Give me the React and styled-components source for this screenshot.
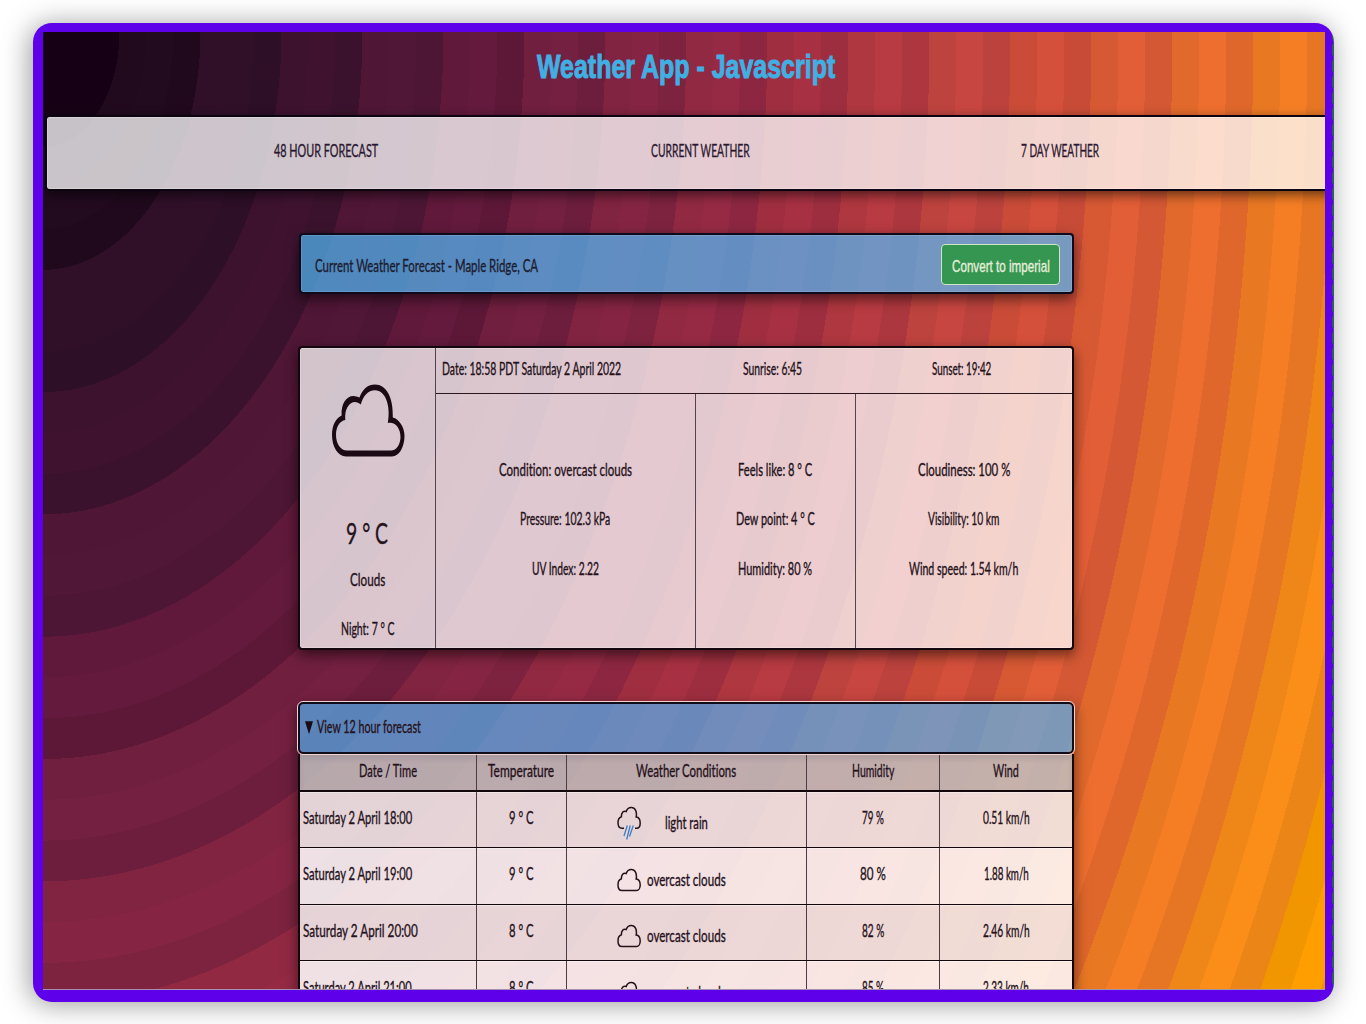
import React, { useLayoutEffect, useRef, useState } from "react";
import styled, { createGlobalStyle } from "styled-components";

const bands = [
  "#160015", "#220a1f", "#301029", "#3f1330", "#511737", "#631a3c",
  "#742041", "#852543", "#962a45", "#a73143", "#b83a42", "#c74641",
  "#d5503b", "#e25e37", "#ed6e2e", "#f57e25", "#fb8e19", "#ff9e00", "#ffa800",
];
const shade = (hex, k) =>
  "rgb(" +
  [1, 3, 5].map((i) => Math.round(parseInt(hex.slice(i, i + 2), 16) * k)).join(",") +
  ")";

const PERIOD = 81;
const STRETCH = 1.51;
const MAX = bands.length * PERIOD;
const stops = bands
  .flatMap((c, i) => {
    const start = (i - 0.056) * PERIOD;
    const edge = (n) => ((Math.max(0, start + (n * PERIOD) / 3) / MAX) * 100).toFixed(3) + "%";
    const tone = i === 0 ? [1, 1, 1] : i < 9 ? [0.97, 1, 0.94] : [0.95, 1, 0.94];
    return tone.map((k, n) => `${shade(c, k)} ${edge(n)} ${edge(n + 1)}`);
  })
  .join(",");

const Global = createGlobalStyle`
  * { box-sizing: border-box; }
  html, body { margin: 0; background: #fff; }
  body {
    height: 1024px;
    overflow: hidden;
    font-family: Lato, "Open Sans", sans-serif;
    font-variant-ligatures: none;
    color: #25121b;
  }
`;

const Stage = styled.div`
  height: 1024px;
  padding: 23px 0 0 33px;
  overflow: hidden;
`;

const Frame = styled.div`
  width: 1301px;
  height: 978.5px;
  padding: 9px 9px 12px 10px;
  border-radius: 19px;
  background:
    radial-gradient(ellipse 2px 9px at 100% 50%, #2b6350 92%, transparent) 100% 3px / 3px 16px repeat-y,
    #5e00ea;
  box-shadow: -3px 2px 28px rgba(0, 0, 0, 0.4);
`;

const Screen = styled.div`
  width: 1282px;
  height: 957.5px;
  overflow: hidden;
  display: flex;
  flex-direction: column;
  border-bottom: 1px solid #a58fb0;
  background: radial-gradient(ellipse ${MAX}px ${MAX * STRETCH}px at 0 0, ${stops});
`;

const Title = styled.h1`
  flex: none;
  margin: 0;
  height: 82.5px;
  padding: 14px 0 0 494px;
  font: bold 33.5px/42px "Liberation Sans", Arial, sans-serif;
  color: #3fb0e3;
`;

const Nav = styled.nav`
  flex: none;
  width: 1300px;
  height: 76.5px;
  margin-left: 2px;
  padding: 0 224px 5px 227px;
  display: flex;
  align-items: center;
  border: 2px solid #0c0410;
  border-radius: 4px;
  background: rgba(255, 255, 255, 0.76);
  background-clip: padding-box;
  box-shadow: 0 4px 12px rgba(0, 0, 0, 0.55), inset 0 0 0 1px rgba(255, 255, 255, 0.25);
  font-size: 18px;
  color: #2a1830;
`;
const NavLink = styled.a`
  margin-right: ${(p) => p.$gap || 0}px;
`;

const Content = styled.main`
  flex: none;
  width: 776px;
  margin: 42px 0 0 255px;
  display: flex;
  flex-direction: column;
`;

const HeaderBar = styled.header`
  height: 61px;
  margin-left: 1px;
  padding: 1px 12px 0 14px;
  display: flex;
  align-items: center;
  justify-content: space-between;
  border: 2px solid #0e0a1c;
  border-radius: 4px;
  background: rgba(81, 192, 255, 0.68);
  background-clip: padding-box;
  box-shadow: 0 5px 13px rgba(0, 0, 0, 0.55), inset 0 0 0 1px rgba(255, 255, 255, 0.12);
  font-size: 17px;
  color: #1c1c30;
`;
const HeaderTitle = styled.div`
  padding-top: 2px;
`;

const ConvertButton = styled.button`
  width: 119px;
  height: 41px;
  padding: 6px 0 0;
  border: 1px solid #cfe6c6;
  border-radius: 4px;
  background: #349650;
  color: #e6efdc;
  font: 17px/20px "Liberation Sans", Arial, sans-serif;
`;

const Card = styled.section`
  height: 304px;
  margin-top: 52px;
  display: grid;
  grid-template-columns: 135.5px 1fr;
  border: 2px solid #14070d;
  border-radius: 4px;
  background: rgba(255, 255, 255, 0.75);
  background-clip: padding-box;
  box-shadow: 0 5px 13px rgba(0, 0, 0, 0.55), inset 0 0 0 1px rgba(255, 255, 255, 0.25);
  font-size: 17px;
  line-height: 20px;
`;

const Now = styled.div`
  border-right: 1px solid #54434d;
  display: flex;
  flex-direction: column;
  align-items: center;
`;
const NowIcon = styled.div`
  margin: 35.5px 0 0 2px;
  height: 73px;
`;
const NowTemp = styled.div`
  margin-top: 59.5px;
  font-size: 28.5px;
  line-height: 34px;
`;
const NowLine = styled.div`
  margin-top: ${(p) => p.$gap}px;
`;

const Details = styled.div`
  display: grid;
  grid-template-rows: 46px 1fr;
`;
const Times = styled.div`
  display: flex;
  padding: 11px 0 0 6.5px;
  border-bottom: 1px solid #2b161d;
`;
const TimeItem = styled.div`
  margin-right: ${(p) => p.$gap || 0}px;
`;
const Stats = styled.div`
  display: grid;
  grid-template-columns: 260.5px 159.5px 1fr;
`;
const StatColumn = styled.div`
  padding-top: 65.5px;
  display: flex;
  flex-direction: column;
  align-items: center;
  gap: 29.5px;
  border-right: ${(p) => (p.$last ? "0" : "1px solid #54434d")};
`;

const Forecast = styled.section`
  margin-top: 52px;
  box-shadow: 0 5px 13px rgba(0, 0, 0, 0.55);
`;
const Summary = styled.div`
  height: 51.5px;
  padding: 0 0 1px 5px;
  display: flex;
  align-items: center;
  gap: 4px;
  border: 2px solid #100c1a;
  outline: 1px solid #f2d3cf;
  border-radius: 5px;
  background: rgba(81, 185, 250, 0.66);
  background-clip: padding-box;
  font-size: 17px;
  line-height: 20px;
`;
const Marker = styled.span`
  width: 8px;
  height: 13px;
  margin-top: 1px;
  background: #1a0c14;
  clip-path: polygon(0 0, 100% 0, 50% 100%);
`;

const Row = styled.div`
  height: ${(p) => (p.$head ? 38 : 56.6)}px;
  display: grid;
  grid-template-columns: 177px 89.5px 240px 133.5px 1fr;
  border: solid #14070c;
  border-width: 0 2px ${(p) => (p.$head ? 2 : 1)}px 2px;
  background: ${(p) =>
    p.$head ? "rgba(193, 192, 191, 0.85)" : p.$even ? "rgba(255, 255, 255, 0.86)" : "rgba(243, 240, 240, 0.86)"};
  background-clip: padding-box;
  box-shadow: ${(p) => (p.$head ? "inset 0 5px 5px rgba(60, 50, 70, 0.12)" : "inset 0 1px 0 rgba(255,255,255,.4)")};
  font-size: 17px;
  line-height: 20px;
`;
const Cell = styled.div`
  display: flex;
  align-items: center;
  justify-content: ${(p) => (p.$left ? "flex-start" : "center")};
  padding: 0 0 ${(p) => (p.$head ? 2 : 3)}px ${(p) => (p.$left ? 3 : 0)}px;
  border-right: ${(p) => (p.$last ? "0" : "1px solid #4d3c43")};
`;
const ConditionCell = styled.div`
  display: flex;
  padding-left: 50px;
  border-right: 1px solid #4d3c43;
`;
const SmallIcon = styled.div`
  width: 24px;
  margin-top: ${(p) => (p.$rain ? 14.5 : 19.5)}px;
`;
const ConditionText = styled.div`
  margin: 21.5px 0 0 ${(p) => (p.$rain ? 24 : 6.5)}px;
`;

const FitBox = styled.span`
  display: inline-block;
  vertical-align: top;
  white-space: nowrap;
`;
const FitText = styled.span`
  display: inline-block;
  transform-origin: 0 50%;
  -webkit-text-stroke: ${(p) => p.$stroke}px currentColor;
`;

function Fit({ w, stroke = 0.35, children }) {
  const ref = useRef(null);
  const [scale, setScale] = useState(1);
  useLayoutEffect(() => {
    setScale(w / ref.current.offsetWidth);
  }, [w, children]);
  return (
    <FitBox style={{ width: w }}>
      <FitText ref={ref} $stroke={stroke} style={{ transform: `scaleX(${scale})` }}>
        {children}
      </FitText>
    </FitBox>
  );
}

function BigCloud() {
  return (
    <svg width="74" height="73" viewBox="0 0 74 73" fill="#1b0a14" fillRule="evenodd">
      <path d="M15 72.5C7 72.5 1 63 1 51C1 41 5 34 10.600 31.500C10 20 15 12 22.500 12C24.500 12 26.500 12.500 28.500 13.500C31.500 5 37 .5 44 .5C55 .5 62.500 13 61.800 33.500C68 35 73.500 43 73.500 52C73.500 63 68 72.500 61 72.500Z M16 66.600H60C65.500 66.600 69.500 60 69.500 53C69.500 44 64 37.500 56.800 39C60 22 54.500 6.300 44 6.300C37 6.300 32 12 29.800 20.500C23 14 13 20 14.300 36C8.500 37 5 43 5 51C5 60 10 66.600 16 66.600Z" />
    </svg>
  );
}

function SmallCloud({ rain }) {
  return (
    <svg width="24" height={rain ? 34 : 24} viewBox={rain ? "0 0 24 34" : "0 0 24 24"} fill="none" stroke="#24121a" strokeWidth="1.5">
      <path
        d={
          rain
            ? "M7 22.300H5C2.500 22.300 1 20 1 16.800C1 13.500 2.300 11.500 4.400 10.800C4.200 7 6.300 4.500 9.200 5.500C11 .2 18.500-.5 19.400 7.500C19.500 9 19.400 10 19.200 11C22 11.300 23.200 14 23.200 17C23.200 20 21.700 22.300 19.500 22.300H18"
            : "M5 22.600C2.500 22.600 1 20 1 16.800C1 13.500 2.300 11.500 4.400 10.800C4.200 7 6.300 4.500 9.200 5.500C11 .2 18.500-.5 19.400 7.500C19.500 9 19.400 10 19.200 11C22 11.300 23.200 14 23.200 17C23.200 20 21.700 22.600 19.500 22.600Z"
        }
      />
      {rain && <path d="M10.300 19.500L7 30M13.200 19.500L9.700 33.500M16.300 19.500L12.500 30.500" stroke="#3c7fc4" strokeWidth="1.300" />}
    </svg>
  );
}

const stats = [
  [["Condition: overcast clouds", 133], ["Pressure: 102.3 kPa", 90], ["UV Index: 2.22", 67]],
  [["Feels like: 8 ° C", 74], ["Dew point: 4 ° C", 78.5], ["Humidity: 80 %", 74]],
  [["Cloudiness: 100 %", 92], ["Visibility: 10 km", 71.5], ["Wind speed: 1.54 km/h", 109.5]],
];
const headings = [["Date / Time", 58], ["Temperature", 66], ["Weather Conditions", 100], ["Humidity", 42.5], ["Wind", 26]];
const hours = [
  { date: ["Saturday 2 April 18:00", 109], temp: "9 ° C", cond: ["light rain", 43], rain: true, hum: ["79 %", 22], wind: ["0.51 km/h", 47] },
  { date: ["Saturday 2 April 19:00", 109], temp: "9 ° C", cond: ["overcast clouds", 78.5], hum: ["80 %", 26], wind: ["1.88 km/h", 45] },
  { date: ["Saturday 2 April 20:00", 114.5], temp: "8 ° C", cond: ["overcast clouds", 78.5], hum: ["82 %", 22.5], wind: ["2.46 km/h", 47] },
  { date: ["Saturday 2 April 21:00", 108.5], temp: "8 ° C", cond: ["overcast clouds", 78.5], hum: ["85 %", 22], wind: ["2.33 km/h", 46] },
];

export default function App() {
  return (
    <Stage>
      <Global />
      <Frame>
        <Screen>
          <Title><Fit w={298} stroke={1}>Weather App - Javascript</Fit></Title>
          <Nav>
            <NavLink $gap={272.5}><Fit w={104}>48 HOUR FORECAST</Fit></NavLink>
            <NavLink $gap={271.5}><Fit w={98.5}>CURRENT WEATHER</Fit></NavLink>
            <NavLink><Fit w={78}>7 DAY WEATHER</Fit></NavLink>
          </Nav>
          <Content>
            <HeaderBar>
              <HeaderTitle><Fit w={223}>Current Weather Forecast - Maple Ridge, CA</Fit></HeaderTitle>
              <ConvertButton><Fit w={98}>Convert to imperial</Fit></ConvertButton>
            </HeaderBar>
            <Card>
              <Now>
                <NowIcon><BigCloud /></NowIcon>
                <NowTemp><Fit w={42}>9 ° C</Fit></NowTemp>
                <NowLine $gap={19.5}><Fit w={35}>Clouds</Fit></NowLine>
                <NowLine $gap={29.5}><Fit w={53.5}>Night: 7 ° C</Fit></NowLine>
              </Now>
              <Details>
                <Times>
                  <TimeItem $gap={122}><Fit w={179}>Date: 18:58 PDT Saturday 2 April 2022</Fit></TimeItem>
                  <TimeItem $gap={130}><Fit w={59}>Sunrise: 6:45</Fit></TimeItem>
                  <TimeItem><Fit w={59.5}>Sunset: 19:42</Fit></TimeItem>
                </Times>
                <Stats>
                  {stats.map((column, i) => (
                    <StatColumn key={i} $last={i === 2}>
                      {column.map(([text, w]) => (
                        <Fit key={text} w={w}>{text}</Fit>
                      ))}
                    </StatColumn>
                  ))}
                </Stats>
              </Details>
            </Card>
            <Forecast>
              <Summary>
                <Marker />
                <Fit w={104}>View 12 hour forecast</Fit>
              </Summary>
              <Row $head>
                {headings.map(([text, w], i) => (
                  <Cell key={text} $head $last={i === 4}><Fit w={w}>{text}</Fit></Cell>
                ))}
              </Row>
              {hours.map((h, i) => (
                <Row key={i} $even={i % 2 === 1}>
                  <Cell $left><Fit w={h.date[1]}>{h.date[0]}</Fit></Cell>
                  <Cell><Fit w={24.5}>{h.temp}</Fit></Cell>
                  <ConditionCell>
                    <SmallIcon $rain={h.rain}><SmallCloud rain={h.rain} /></SmallIcon>
                    <ConditionText $rain={h.rain}><Fit w={h.cond[1]}>{h.cond[0]}</Fit></ConditionText>
                  </ConditionCell>
                  <Cell><Fit w={h.hum[1]}>{h.hum[0]}</Fit></Cell>
                  <Cell $last><Fit w={h.wind[1]}>{h.wind[0]}</Fit></Cell>
                </Row>
              ))}
            </Forecast>
          </Content>
        </Screen>
      </Frame>
    </Stage>
  );
}
